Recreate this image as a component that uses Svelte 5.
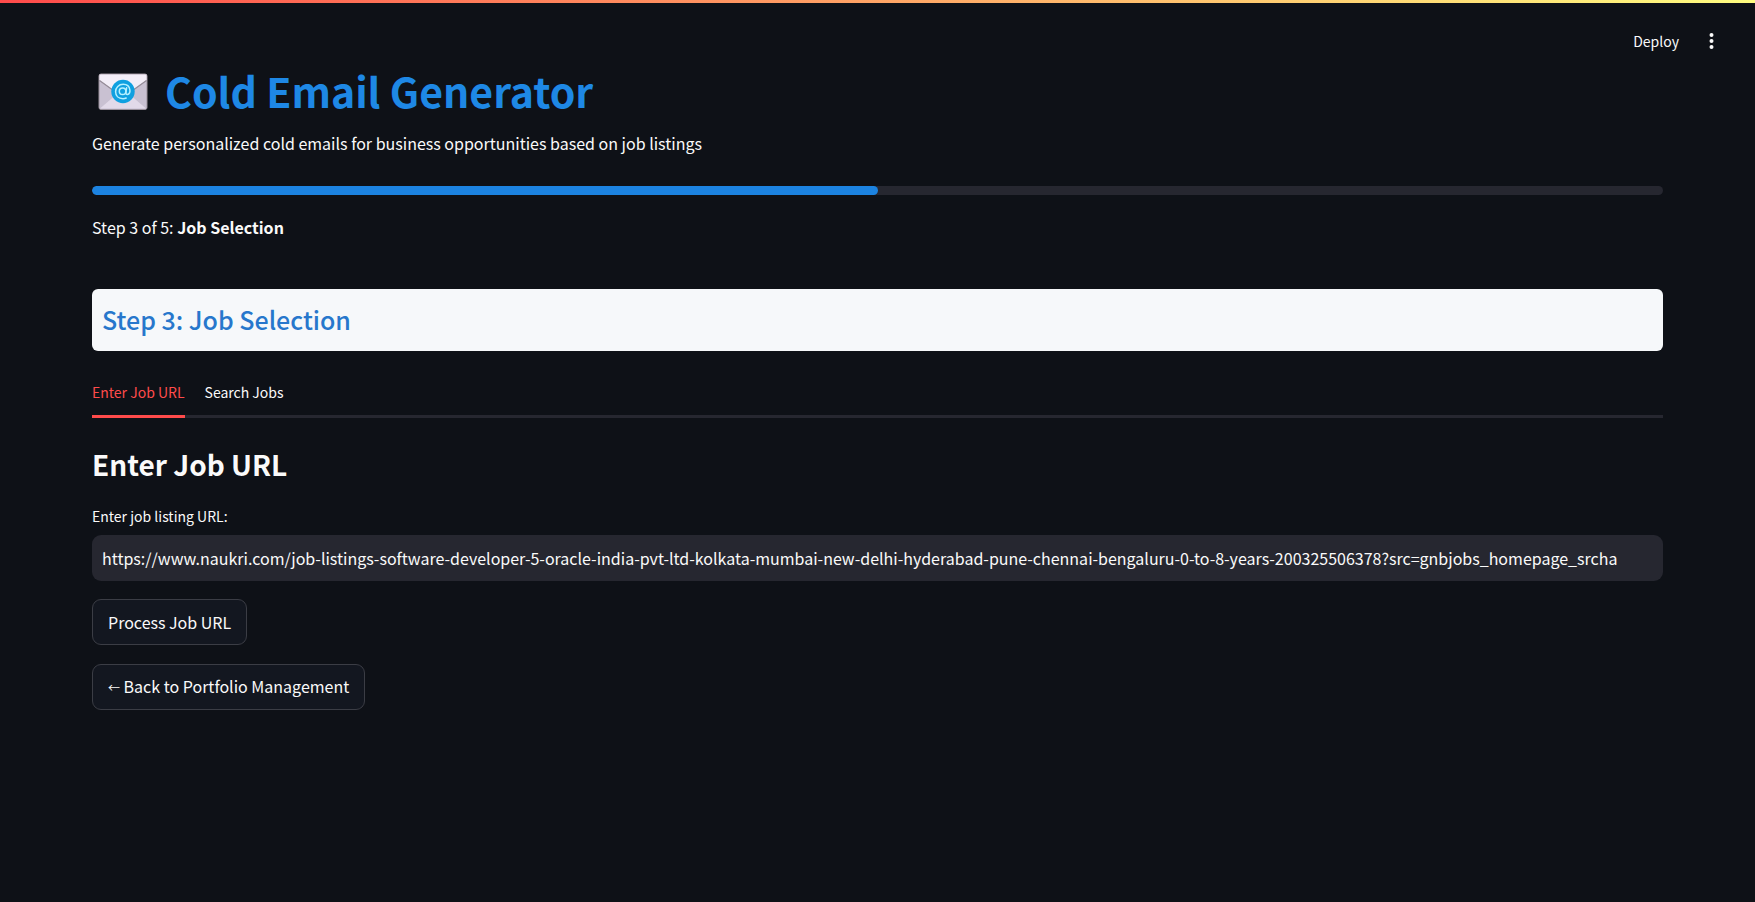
<script>
  const step = 3;
  const totalSteps = 5;
  const progress = 50;
  const tabs = ['Enter Job URL', 'Search Jobs'];
  let activeTab = $state(0);
  let jobUrl = $state(
    'https://www.naukri.com/job-listings-software-developer-5-oracle-india-pvt-ltd-kolkata-mumbai-new-delhi-hyderabad-pune-chennai-bengaluru-0-to-8-years-200325506378?src=gnbjobs_homepage_srcha'
  );
</script>

<div class="page">
  <div class="decoration"></div>
  <header>
    <button class="deploy" type="button">Deploy</button>
    <button class="menu" type="button" aria-label="Main menu">
      <svg viewBox="0 0 20 20" width="20" height="20" fill="#fafafa" aria-hidden="true">
        <circle cx="10.500" cy="4" r="2" />
        <circle cx="10.500" cy="10" r="2" />
        <circle cx="10.500" cy="16" r="2" />
      </svg>
    </button>
  </header>

  <main>
    <h1>
      <svg class="mail" viewBox="0 0 50 38" width="50" height="38" aria-hidden="true">
        <rect x="1" y="1" width="48" height="35.500" rx="2" fill="#c9c1d2" stroke="#9b929c" />
        <path d="M2 35.500 L20 20 H30 L48 35.500 Z" fill="#e2dae9" />
        <path d="M1.500 1.500 H48.500 V7 L29 21 Q25 24 21 21 L1.500 7 Z" fill="#f3eef8" />
        <path d="M1.500 7.500 L21 21.500 Q25 24.500 29 21.500 L48.500 7.500" fill="none" stroke="#958c98" stroke-width="1.200" />
        <circle cx="25" cy="18.500" r="11.700" fill="#10a0e0" />
        <circle cx="24.600" cy="18.300" r="3.300" fill="none" stroke="#b5f0ff" stroke-width="1.500" />
        <path d="M28.600 14.800 L27.900 19.500 Q27.800 21.600 29.400 21.500 C31.500 21.300 32.200 19 31.900 17 C31.400 13.500 28.700 11.300 25.200 11.300 C20.800 11.300 17.600 14.500 17.600 18.700 C17.600 22.900 20.600 25.700 25 25.700 Q26.800 25.700 28.200 25" fill="none" stroke="#b5f0ff" stroke-width="1.500" stroke-linecap="round" />
      </svg>
      <span>Cold Email Generator</span>
    </h1>
    <p class="subtitle">Generate personalized cold emails for business opportunities based on job listings</p>

    <div class="track" role="progressbar" aria-label="Progress" aria-valuenow={progress} aria-valuemin="0" aria-valuemax="100">
      <div class="fill" style="width: {progress}%"></div>
    </div>
    <p class="status">Step {step} of {totalSteps}: <strong>Job Selection</strong></p>

    <h2 class="banner">Step 3: Job Selection</h2>

    <div class="tabs" role="tablist">
      {#each tabs as tab, i}
        <button type="button" role="tab" class:active={activeTab === i} aria-selected={activeTab === i} onclick={() => (activeTab = i)}>{tab}</button>
      {/each}
    </div>

    <h3>Enter Job URL</h3>
    <label for="job-url">Enter job listing URL:</label>
    <input id="job-url" type="text" bind:value={jobUrl} />
    <div class="actions">
      <button type="button">Process Job URL</button>
      <button type="button"><span class="arrow">←</span> Back to Portfolio Management</button>
    </div>
  </main>
</div>

<style>
  :global(body) {
    margin: 0;
    background: #0e1117;
  }
  .page {
    min-height: 100vh;
    background: #0e1117;
    color: #fafafa;
    font-family: "Noto Sans CJK SC", "Noto Sans", sans-serif;
    font-size: 16px;
    line-height: 28px;
  }
  .decoration {
    height: 3px;
    background: linear-gradient(90deg, #ff4b4b, #fffd80);
  }
  button,
  input {
    font: inherit;
    color: inherit;
    margin: 0;
    box-sizing: border-box;
  }
  button {
    cursor: pointer;
  }
  header {
    display: flex;
    justify-content: flex-end;
    align-items: center;
    gap: 22px;
    padding: 24px 34px 5px;
  }
  header button {
    display: flex;
    align-items: center;
    padding: 0;
    border: 0;
    background: none;
    font-size: 14px;
  }
  main {
    display: flex;
    flex-direction: column;
    padding: 0 92px 40px;
  }
  h1,
  h2,
  h3,
  p {
    margin: 0;
  }
  h1 {
    display: flex;
    align-items: center;
    gap: 17px;
    padding-left: 6px;
    color: #1e88e5;
    font-size: 41px;
    font-weight: 700;
    line-height: 60px;
  }
  h1 span {
    padding-bottom: 4px;
  }
  .subtitle {
    margin-top: 5px;
  }
  .track {
    height: 9px;
    margin-top: 29px;
    border-radius: 5px;
    background: #262730;
    overflow: hidden;
  }
  .fill {
    height: 100%;
    border-radius: 5px;
    background: #1c83e1;
  }
  .status {
    margin-top: 18px;
  }
  .banner {
    margin-top: 48px;
    padding: 9px 10px 11px;
    border-radius: 6px;
    background: #f6f8fa;
    color: #2777cc;
    font-size: 25px;
    font-weight: 500;
    line-height: 42px;
  }
  .tabs {
    display: flex;
    gap: 20px;
    margin-top: 18px;
    box-shadow: inset 0 -3px #262730;
  }
  .tabs button {
    padding: 9px 0;
    border: 0;
    border-bottom: 3px solid transparent;
    background: none;
    font-size: 14px;
  }
  .tabs .active {
    color: #ff4b4b;
    border-color: #ff4b4b;
  }
  h3 {
    margin-top: 26px;
    font-size: 28px;
    font-weight: 600;
    line-height: 40px;
  }
  label {
    margin-top: 18px;
    font-size: 14px;
  }
  input {
    width: 100%;
    height: 46px;
    margin-top: 5px;
    padding: 0 10px 1px;
    border: 0;
    border-radius: 9px;
    background: #262730;
  }
  .actions {
    display: flex;
    flex-direction: column;
    align-items: flex-start;
    gap: 19px;
    margin-top: 18px;
  }
  .actions button {
    height: 46px;
    padding: 0 15px;
    border: 1px solid #3b3d45;
    border-radius: 9px;
    background: #131720;
  }
  .arrow {
    font-size: 12px;
  }
</style>
